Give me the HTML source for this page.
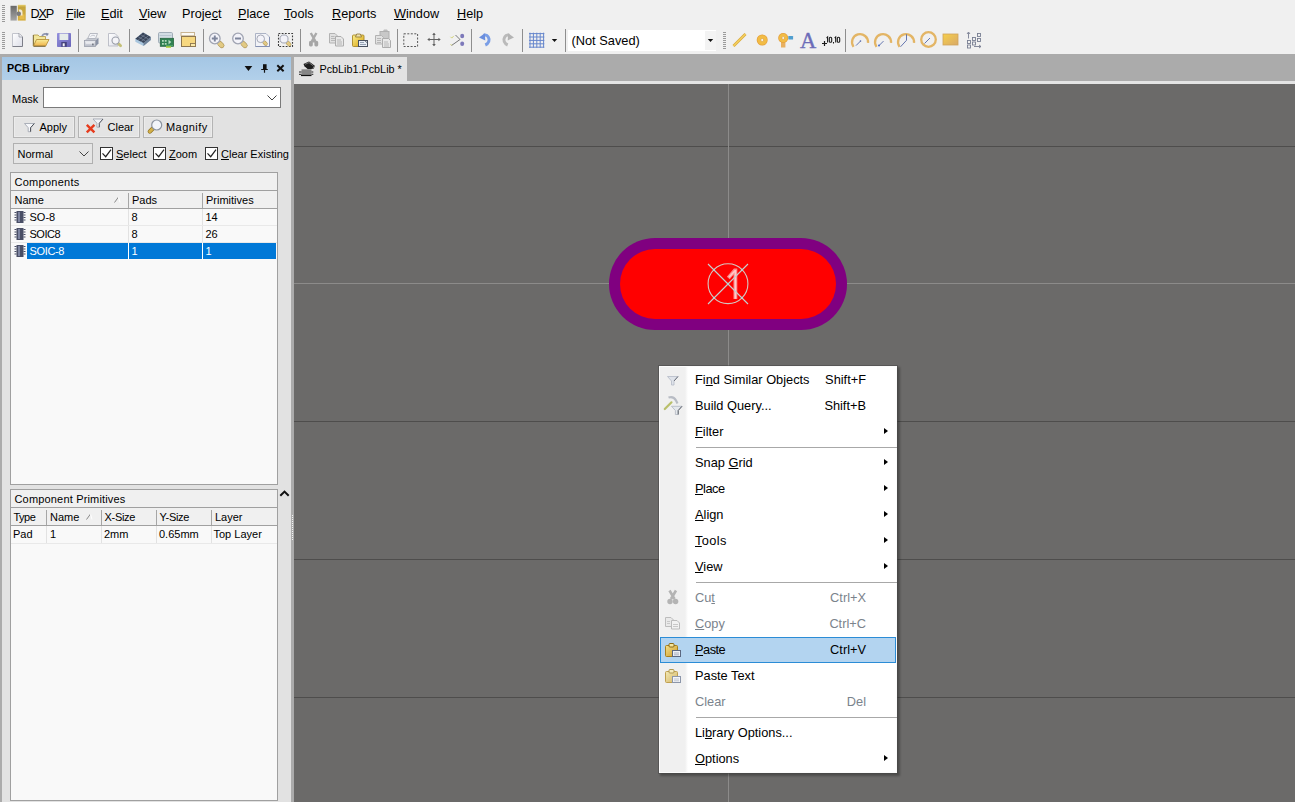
<!DOCTYPE html>
<html>
<head>
<meta charset="utf-8">
<title>PcbLib1.PcbLib</title>
<style>
html,body{margin:0;padding:0;}
body{width:1295px;height:802px;overflow:hidden;position:relative;background:#f0f0f0;font-family:"Liberation Sans",sans-serif;font-size:11px;color:#000;}
.abs{position:absolute;}
.t{position:absolute;white-space:nowrap;line-height:1;}
u{text-decoration:underline;text-underline-offset:1px;text-decoration-thickness:1px;}
/* top */
#topbar{left:0;top:0;width:1295px;height:54px;background:#f0f0f0;}
.mi{position:absolute;top:7px;font-size:12.7px;white-space:nowrap;line-height:14px;color:#000;}
.tsep{position:absolute;top:30px;width:1px;height:20px;background:#a0a0a0;}
.ico{position:absolute;top:32px;width:16px;height:16px;}
#band{left:0;top:54px;width:1295px;height:3px;background:#ababab;}
/* panel */
#panel{left:2px;top:57px;width:289px;height:745px;background:#e2e2e2;}
#leftstrip{left:0;top:57px;width:2px;height:745px;background:#ababab;}
#split{left:291px;top:57px;width:3px;height:745px;background:#ababab;}
#ptitle{left:2px;top:57px;width:289px;height:23px;background:linear-gradient(#a4c6e4,#b2d0ea);}
.pt{font-size:11px;}
.btn{position:absolute;height:20px;top:116px;border:1px solid #b4b4b4;background:#e4e4e4;box-sizing:content-box;box-shadow:inset 0 0 0 1px #ececec;}
.cb{position:absolute;top:147px;width:11px;height:11px;border:1px solid #333;background:#fff;}
.box{position:absolute;border:1px solid #a0a0a0;background:#f9f9f9;}
.hdr{position:absolute;left:0;right:0;background:#f0f0f0;border-bottom:1px solid #a0a0a0;}
.vd{position:absolute;width:1px;background:#e2e2e2;}
.vd.hd{background:#a6a6a6;}
/* doc area */
#tabstrip{left:294px;top:57px;width:1001px;height:24px;background:#ababab;}
#tabline{left:294px;top:81px;width:1001px;height:3px;background:#e4e4e4;}
#tab{left:294px;top:57px;width:113px;height:27px;background:#e3e3e3;}
#canvas{left:294px;top:84px;width:1001px;height:718px;background:#6b6a69;overflow:hidden;}
.hl{position:absolute;left:0;width:1001px;height:1px;background:#8c8b8a;}
.hl.dk{background:#4e4d4c;}
.vl{position:absolute;top:0;width:1px;height:718px;background:#8c8b8a;}
/* context menu */
#menu{left:659px;top:366px;width:236px;height:405px;background:#fff;border:1px solid #fbfbfb;box-shadow:0 0 0 1px rgba(70,70,70,0.5),2px 2px 2px 1px rgba(0,0,0,0.28);}
#gutter{left:0;top:0;width:28px;height:405px;background:linear-gradient(90deg,#f0f0f0 0,#f0f0f0 25px,#fff 28px);}
.m{position:absolute;left:35px;font-size:12.8px;white-space:nowrap;line-height:14px;color:#000;}
.k{position:absolute;right:30px;font-size:12.8px;white-space:nowrap;line-height:14px;color:#000;}
.dis{color:#7b838c;}
.msep{position:absolute;left:36px;right:-1px;height:1px;background:#a8a8a8;}
.arr{position:absolute;left:223.500px;width:0;height:0;border-left:4.500px solid #000;border-top:3.800px solid transparent;border-bottom:3.800px solid transparent;}
</style>
</head>
<body>
<!-- TOP BAR -->
<div id="topbar" class="abs">
  <div class="mi" style="left:30.5px;letter-spacing:-1.2px">D<u>X</u>P</div>
  <div class="mi" style="left:66px;letter-spacing:-0.35px"><u>F</u>ile</div>
  <div class="mi" style="left:101px"><u>E</u>dit</div>
  <div class="mi" style="left:139px"><u>V</u>iew</div>
  <div class="mi" style="left:182px">Proje<u>c</u>t</div>
  <div class="mi" style="left:238px"><u>P</u>lace</div>
  <div class="mi" style="left:284px"><u>T</u>ools</div>
  <div class="mi" style="left:332px"><u>R</u>eports</div>
  <div class="mi" style="left:394px"><u>W</u>indow</div>
  <div class="mi" style="left:457px"><u>H</u>elp</div>
</div>

<div class="abs" style="left:568px;top:30px;width:148px;height:21px;background:#fff;"></div>
<div class="abs" style="left:705px;top:31px;width:11px;height:19px;background:#f3f3f3;"></div>
<div class="t" style="left:571.5px;top:34px;font-size:12.8px;line-height:14px;">(Not Saved)</div>
<svg class="abs" style="left:0;top:0" width="1000" height="54" viewBox="0 0 1000 54">
<defs>
  <linearGradient id="gy" x1="0" y1="0" x2="0" y2="1"><stop offset="0" stop-color="#fbe9a0"/><stop offset="1" stop-color="#e9b94e"/></linearGradient>
  <linearGradient id="gor" x1="0" y1="0" x2="1" y2="1"><stop offset="0" stop-color="#f6cf4a"/><stop offset="1" stop-color="#d9a968"/></linearGradient>
  <g id="mag"><path d="M5 5l2 2" stroke="#a48c50" stroke-width="5.200" stroke-linecap="round"/><path d="M4.800 4.800l2.200 2.200" stroke="#e2ca84" stroke-width="4" stroke-linecap="round"/><circle cx="0" cy="0" r="5.300" fill="#f3f3f9" stroke="#a0a4b2" stroke-width="1.300"/></g>
  <g id="arc"><path d="M-6.500 5.500A8 8 0 1 1 8 1.500" fill="none" stroke="#e3b565" stroke-width="2.300"/></g>
</defs>
<!-- grips -->
<g stroke="#9a9a9a" stroke-width="1">
  <path d="M2 5.500h3M2 7.500h3M2 9.500h3M2 11.500h3M2 13.500h3M2 15.500h3M2 17.500h3M2 19.500h3M2 21.500h3"/>
  <path d="M2 32.500h3M2 34.500h3M2 36.500h3M2 38.500h3M2 40.500h3M2 42.500h3M2 44.500h3M2 46.500h3M2 48.500h3"/>
  <path d="M723 32.500h3M723 34.500h3M723 36.500h3M723 38.500h3M723 40.500h3M723 42.500h3M723 44.500h3M723 46.500h3M723 48.500h3"/>
</g>
<!-- separators -->
<g stroke="#8e8e8e" stroke-width="1">
  <path d="M78.500 29v23M129.500 29v23M203.500 29v23M300.500 29v23M397.500 29v23M471.500 29v23M522.500 29v23M565.500 29v23M845.500 29v23"/>
</g>
<!-- DXP logo -->
<g>
  <linearGradient id="glg" x1="0" y1="0" x2="0" y2="1"><stop offset="0" stop-color="#686868"/><stop offset="1" stop-color="#a6a6a6"/></linearGradient>
  <linearGradient id="glo" x1="0" y1="0" x2="0" y2="1"><stop offset="0" stop-color="#e8d070"/><stop offset="0.150" stop-color="#c4a43c"/><stop offset="1" stop-color="#d8b040"/></linearGradient>
  <rect x="10.500" y="5.800" width="6.300" height="14.800" fill="url(#glg)"/>
  <rect x="17.800" y="4.800" width="7.900" height="15.800" fill="url(#glo)"/>
  <rect x="19.500" y="14.500" width="5" height="4.500" fill="#e6bc4c"/>
  <path d="M18.500 9.500h2.500a3 3 0 0 1 1.500 3v3h-2z" fill="#f2ead8"/>
  <circle cx="18.700" cy="13.700" r="2.300" fill="#7c7c7c"/>
</g>
<!-- new -->
<linearGradient id="gpg" x1="0" y1="0" x2="1" y2="1"><stop offset="0" stop-color="#ffffff"/><stop offset="1" stop-color="#dcdee8"/></linearGradient>
<path d="M12.500 33.500h6.500l3.500 3.500v9.500h-10z" fill="url(#gpg)"/>
<path d="M12.500 46.500v-13h6.500" fill="none" stroke="#c2c4cc" stroke-width="1"/>
<path d="M19 33.500l3.500 3.500v9.500h-10" fill="none" stroke="#7c7e88" stroke-width="1"/>
<path d="M19 33.500v3.500h3.500" fill="#eef0f6" stroke="#9a9ca6" stroke-width="0.800"/>
<!-- open -->
<linearGradient id="gfo" x1="0" y1="0" x2="0" y2="1"><stop offset="0" stop-color="#f8ec98"/><stop offset="1" stop-color="#efb248"/></linearGradient>
<path d="M33.500 46v-11h4.500l1.500 1.500h6v3" fill="#f2e69a" stroke="#b8a050" stroke-width="0.900"/>
<path d="M33.300 46v-11" stroke="#7c6c3c" stroke-width="1"/>
<path d="M33.500 46l3-6.500h12.500l-3.300 6.500z" fill="url(#gfo)" stroke="#b89440" stroke-width="0.900"/>
<path d="M33.500 46.300h12" stroke="#6c5c34" stroke-width="0.900"/>
<path d="M42 36c1.500-2.500 4-2.800 5.500-1" fill="none" stroke="#8e96b0" stroke-width="1.600"/><path d="M46 32.800l3 1-2.200 2.500z" fill="#7e86a4"/>
<!-- save -->
<linearGradient id="gsv" x1="0" y1="0" x2="1" y2="1"><stop offset="0" stop-color="#9490de"/><stop offset="1" stop-color="#6864b8"/></linearGradient>
<rect x="57" y="33" width="14" height="14" rx="0.800" fill="url(#gsv)"/>
<rect x="59.500" y="33.600" width="8.800" height="6.400" fill="#e6ecea"/>
<rect x="61.300" y="42" width="5.500" height="4.800" fill="#45427c"/><rect x="62.700" y="43.300" width="2" height="3" fill="#f0f0f8"/>
<!-- print -->
<linearGradient id="gpr" x1="0" y1="0" x2="0" y2="1"><stop offset="0" stop-color="#eceef2"/><stop offset="1" stop-color="#b4b8c4"/></linearGradient>
<path d="M84.500 40.500l3-2.800h11l-3 2.800z" fill="#c4c8d0"/>
<path d="M95.500 40.500l3-2.800v5.800l-3 3z" fill="#8a92a4"/>
<path d="M87.800 38.500l2.200-5h7.500l-2 5z" fill="#f4f5f8" stroke="#a8acb6" stroke-width="0.800"/>
<path d="M90.500 36.500c1.500-1.500 3-1.500 4.500-0.500" fill="none" stroke="#b4b8c0" stroke-width="0.800"/>
<rect x="84.500" y="40.500" width="11" height="6" fill="url(#gpr)" stroke="#9ca0ac" stroke-width="0.800"/>
<path d="M86 43h8" stroke="#f8f8fa" stroke-width="1"/>
<rect x="92.300" y="43.500" width="1.200" height="1.800" fill="#555a66"/>
<!-- preview -->
<path d="M108.500 33.500h6.500l3 3v9.500h-9.500z" fill="url(#gpg)" stroke="#b8bac4" stroke-width="0.900"/>
<path d="M118.600 43.800l2 2" stroke="#c4c078" stroke-width="2.800" stroke-linecap="round"/>
<circle cx="115.600" cy="40.600" r="3.600" fill="#f4f4f8" stroke="#9a9ea8" stroke-width="1.100"/>
<!-- 3d chip -->
<path d="M135.300 38.700l7.700-6.200 7.800 4.500v3l-7.300 6-8.200-4.300z" fill="#a9c6de"/>
<path d="M143.500 43l7.300-6v3l-7.300 6z" fill="#6f8198"/>
<path d="M135.300 38.700l7.700-6.200 7.800 4.500-7.300 6z" fill="#384458"/>
<g stroke="#8c9ab0" stroke-width="0.500"><path d="M138 36.600l7.500 4.500M140.500 34.600l7.700 4.400M138 40.200l7.700-6.200M141 41.700l7.600-6.100"/></g>
<!-- pcb green -->
<rect x="158.500" y="32.500" width="14" height="10.500" rx="1.200" fill="#d3dde4" stroke="#9aa6b2" stroke-width="0.900"/>
<path d="M159.500 35.500h12" stroke="#b8c6d0" stroke-width="1"/>
<rect x="160.300" y="38.300" width="13.200" height="8" fill="#2f8052" stroke="#27663f" stroke-width="0.800"/>
<path d="M162 40h1.800v1.800h-1.800zM164.800 40h1.800v1.800h-1.800zM162 43h1.800v1.800h-1.800zM164.800 43h1.800v1.800h-1.800z" fill="#b4d8bc"/><path d="M168.500 39.800l2.800 2.300-2.800 2.300z" fill="#b8dcc4"/>
<path d="M166 45.500h7" stroke="#4ca468" stroke-width="1.200"/>
<rect x="166" y="46.300" width="5" height="1.500" fill="#b4d43a"/>
<!-- yellow window -->
<rect x="181" y="32.500" width="13.500" height="3.300" fill="#fbfaf6" stroke="#c4ae88" stroke-width="0.900"/>
<rect x="181.500" y="36.500" width="14" height="10" fill="#f7d880" stroke="#8c7650" stroke-width="1"/>
<rect x="190.500" y="43.500" width="5" height="3" fill="#fbe9a8" stroke="#8c7650" stroke-width="0.900"/>
<!-- zoom in / out / page / sel -->
<g transform="translate(214.800,38.500)"><use href="#mag"/><path d="M-3 0h6M0 -3v6" stroke="#7e869c" stroke-width="1.900"/></g>
<g transform="translate(238,38.500)"><use href="#mag"/><path d="M-3 0h6" stroke="#7e869c" stroke-width="2"/></g>
<path d="M255.500 33.500h10.500l3.500 3.500v9.500h-14z" fill="#f2f3f7" stroke="#a4acc0" stroke-width="0.900"/><path d="M269.500 37v9.500h-14" fill="none" stroke="#7f8cb0" stroke-width="0.900"/>
<g transform="translate(260.700,38.800) scale(0.720)"><use href="#mag"/></g>
<rect x="278.500" y="33.500" width="14" height="13" fill="none" stroke="#3a3a3a" stroke-width="1.100" stroke-dasharray="1.800 1.400"/>
<g transform="translate(284,39) scale(0.760)"><use href="#mag"/></g>
<!-- cut grey -->
<path d="M310.800 33l4.700 8.500M316.400 33l-4.700 8.500" stroke="#aaaaaa" stroke-width="2.400"/>
<rect x="309" y="41" width="3.800" height="5.500" rx="1.400" fill="#a6a6a6"/><rect x="314.400" y="41" width="3.800" height="5.500" rx="1.400" fill="#a6a6a6"/>
<rect x="312" y="40" width="3.200" height="2.500" fill="#a8a8a8"/>
<!-- copy grey -->
<path d="M329.500 33.500h5.500l2.500 2.500v7h-8z" fill="#e0e0e0" stroke="#b2b2b2" stroke-width="1"/>
<path d="M331 36.500h3.500M331 38.500h4M331 40.500h4" stroke="#b8b8b8" stroke-width="1"/>
<path d="M335.500 36.500h5.500l2.500 2.500v7h-8z" fill="#e8e8e8" stroke="#acacac" stroke-width="1"/>
<path d="M337 40h4M337 42h5M337 44h5" stroke="#b4b4b4" stroke-width="1"/>
<!-- paste -->
<linearGradient id="gpa" x1="0" y1="0" x2="1" y2="1"><stop offset="0" stop-color="#fbf090"/><stop offset="0.600" stop-color="#e6c040"/><stop offset="1" stop-color="#c89820"/></linearGradient>
<rect x="352.500" y="35" width="11.500" height="11.500" rx="1" fill="url(#gpa)" stroke="#a88828" stroke-width="0.900"/>
<path d="M355.500 37l1.200-3h3.600l1.200 3z" fill="#efe2b0" stroke="#8c7430" stroke-width="0.800"/>
<rect x="358.500" y="40.500" width="9" height="6" fill="#e8eef6" stroke="#48505e" stroke-width="1"/>
<path d="M364.500 40.500l3 2.500" stroke="#48505e" stroke-width="0.800"/>
<path d="M360 42.500h4M360 44.500h6" stroke="#8c98ac" stroke-width="0.900"/>
<!-- paste special grey -->
<rect x="380" y="31.500" width="9" height="10" fill="#c8c8c8" stroke="#b0b0b0" stroke-width="1"/>
<path d="M383 31l1-1.500h3l1 1.500z" fill="#bcbcbc"/>
<path d="M375.500 35.500h6l2 2v6.500h-8z" fill="#e2e2e2" stroke="#b2b2b2" stroke-width="1"/>
<path d="M382.500 38.500h6l2 2v7h-8z" fill="#e8e8e8" stroke="#acacac" stroke-width="1"/>
<path d="M384 42h4M384 44h5M384 46h5M377 38.500h4M377 40.500h4M377 42.500h4" stroke="#b8b8b8" stroke-width="1"/>
<!-- select rect -->
<rect x="403.800" y="33.800" width="13.800" height="12.700" fill="none" stroke="#585858" stroke-width="1" stroke-dasharray="2 1.500"/>
<!-- move -->
<path d="M428 39.500h12M434 33.500v12" stroke="#606060" stroke-width="1"/>
<path d="M427.300 39.500l2.300-1.800v3.600zM440.700 39.500l-2.300-1.800v3.600zM434 32.800l-1.800 2.300h3.600zM434 46.200l-1.800-2.300h3.600z" fill="#606060"/>
<!-- deselect -->
<path d="M455.500 35l4.500 4.500-8.500 6" fill="none" stroke="#6a6a6a" stroke-width="0.900"/>
<path d="M450.500 36.800l1.300 1.300 2-2.200M450.500 44l1.300 1.500" fill="none" stroke="#d0d070" stroke-width="0.900"/>
<ellipse cx="462.200" cy="36" rx="2" ry="2.300" fill="#7d79ba"/><ellipse cx="462.200" cy="43.800" rx="2" ry="2.300" fill="#7d79ba"/>
<!-- undo -->
<path d="M485.300 45c3.500-1.500 4.800-5 3-8-1-1.800-2.800-2.300-4.500-1.800" fill="none" stroke="#7a9ee6" stroke-width="3"/>
<path d="M479 37.500l5.800-4.300 0.500 7.300z" fill="#6a8ede"/>
<!-- redo -->
<path d="M507.700 45c-3.500-1.500-4.800-5-3-8 1-1.800 2.800-2.300 4.500-1.800" fill="none" stroke="#bababa" stroke-width="3"/>
<path d="M514 37.500l-5.800-4.300-0.500 7.300z" fill="#b4b4b4"/>
<!-- grid -->
<g stroke="#6686cc" stroke-width="1"><path d="M530 32.700v15M533.400 32.700v15M536.800 32.700v15M540.200 32.700v15M543.600 32.700v15M529 33.600h15.300M529 37h15.300M529 40.400h15.300M529 43.800h15.300M529 47.200h15.300"/></g>
<path d="M551.800 39h5.400l-2.700 3z" fill="#111"/>
<path d="M707.800 39h5.400l-2.700 3z" fill="#111"/>
<!-- line -->
<path d="M733.500 46l12-12" stroke="#d8a838" stroke-width="2.800"/>
<path d="M733.500 46l12-12" stroke="#f4d060" stroke-width="1.400"/>
<!-- pad -->
<circle cx="762.200" cy="40" r="5.500" fill="#e4a03c"/>
<circle cx="762.200" cy="40" r="4.800" fill="#f2bc44"/>
<circle cx="762.200" cy="40" r="1.500" fill="#fbf6ea" stroke="#d89a3a" stroke-width="0.600"/>
<!-- via -->
<rect x="788.300" y="36" width="4.800" height="3.600" rx="0.600" fill="#4f9ecf"/>
<rect x="781" y="41" width="4.400" height="6.500" fill="#e8b060"/>
<circle cx="783.200" cy="38" r="5" fill="#e4a03c"/>
<circle cx="783.200" cy="38" r="4.300" fill="#f2bc44"/>
<circle cx="783.200" cy="38" r="1.400" fill="#fbf6ea" stroke="#d89a3a" stroke-width="0.600"/>
<!-- A -->
<text x="808" y="47.500" style="font-family:'Liberation Serif',serif" font-size="22.500" text-anchor="middle" fill="#6c6cb8" stroke="#6c6cb8" stroke-width="0.400">A</text>
<!-- +10,10 -->
<path d="M822 43.500h5M824.500 41v5" stroke="#1a1a1a" stroke-width="1.200"/>
<g fill="none" stroke="#1a1a1a" stroke-width="1.100">
  <path d="M826.600 38l1-1v5.600"/><rect x="829.300" y="37.300" width="2.400" height="5" rx="1.100"/>
  <path d="M833.500 42v1.500"/>
  <path d="M834.700 38l1-1v5.600"/><rect x="837.300" y="37.300" width="2.400" height="5" rx="1.100"/>
</g>
<!-- arcs -->
<g transform="translate(860,41.300)"><use href="#arc"/><path d="M-4 4.300l4.500-4.500" stroke="#5468a8" stroke-width="0.900"/><circle cx="0.500" cy="-0.300" r="0.800" fill="#5468a8"/></g>
<g transform="translate(883,41.300)"><use href="#arc"/><path d="M-4 4.300l4.500-4.500" stroke="#5468a8" stroke-width="0.900"/><circle cx="-4" cy="4.300" r="1" fill="#4a70d0"/></g>
<g transform="translate(906,41.300)"><use href="#arc"/><path d="M-5.500 5.500l6-6.500v-6" fill="none" stroke="#5468a8" stroke-width="0.900"/></g>
<circle cx="928.500" cy="39.500" r="7.300" fill="none" stroke="#e3b565" stroke-width="2.300"/><path d="M924.500 43.500l5.500-5.500" stroke="#5468a8" stroke-width="0.900"/>
<!-- fill -->
<rect x="943" y="34" width="15" height="11" fill="url(#gor)" stroke="#d0a45a" stroke-width="0.800"/>
<!-- array -->
<g fill="none" stroke="#787e92" stroke-width="0.900"><rect x="967.500" y="40.500" width="3" height="3"/><rect x="967.500" y="45" width="3" height="3"/><rect x="972.500" y="37.500" width="3" height="3"/><rect x="972.500" y="42" width="3" height="3"/><rect x="977.500" y="33.500" width="3" height="3"/><rect x="977.500" y="38.500" width="3" height="3"/>
<path d="M968.500 38.500v-6M967 34l1.500-2 1.500 2M974 46.500h7M979 45l2 1.500-2 1.500"/></g>
</svg>
<div id="band" class="abs"></div>

<!-- LEFT PANEL -->
<div id="leftstrip" class="abs"></div>
<div id="panel" class="abs"></div>
<div id="ptitle" class="abs"></div>
<div id="split" class="abs"></div>

<!-- panel title -->
<div class="t" style="left:7px;top:62px;font-size:10.8px;font-weight:bold;line-height:13px;">PCB Library</div>
<svg class="abs" style="left:243px;top:62px" width="44" height="14" viewBox="243 62 44 14">
  <path d="M244.600 66h7.700l-3.850 5z" fill="#111"/>
  <path d="M263 64.200h3.600v4.800h-3.600z" fill="#111"/><path d="M261.200 69.500h6.600M264.500 70v2.800" stroke="#111" stroke-width="1.200" fill="none"/>
  <path d="M277.300 65.300l6.300 6M283.600 65.300l-6.300 6" stroke="#111" stroke-width="2" fill="none"/>
</svg>
<!-- mask -->
<div class="t pt" style="left:12px;top:93px;line-height:13px;">Mask</div>
<div class="abs" style="left:43px;top:87px;width:236px;height:19px;background:#fff;border:1px solid #7a7a7a;"></div>
<svg class="abs" style="left:266px;top:94px" width="12" height="8" viewBox="0 0 12 8"><path d="M1.500 1.500l4.500 4.500 4.500-4.500" stroke="#444" stroke-width="1" fill="none"/></svg>
<!-- buttons -->
<div class="btn" style="left:13px;width:60px;"></div>
<div class="btn" style="left:78px;width:60px;"></div>
<div class="btn" style="left:143px;width:68px;"></div>
<svg class="abs" style="left:22px;top:121px" width="14" height="12" viewBox="22 121 14 12"><path d="M24.500 123.500h9.800l-3.700 4.200v4h-2.400v-4z" fill="#f6f7fa" stroke="#a4a8b2" stroke-width="0.900"/><path d="M34.300 123.500l-3.700 4.200v4" fill="none" stroke="#4c5058" stroke-width="1"/></svg>
<div class="t pt" style="left:39.5px;top:121px;line-height:13px;">Apply</div>
<svg class="abs" style="left:85px;top:117px" width="20" height="17" viewBox="85 117 20 17"><path d="M93 119h10l-3.700 4.200v4h-2.400v-4z" fill="#f2f4f8" stroke="#a4a8b2" stroke-width="0.900"/><path d="M103 119l-3.700 4.200v4" fill="none" stroke="#5c6068" stroke-width="1"/><path d="M86.800 124.800l7.600 7.600M94.400 124.800l-7.600 7.600" stroke="#e63c1e" stroke-width="2.400"/></svg>
<div class="t pt" style="left:107.5px;top:121px;line-height:13px;">Clear</div>
<svg class="abs" style="left:146px;top:117px" width="18" height="18" viewBox="146 117 18 18"><path d="M149.800 131.500l3-3" stroke="#8c7020" stroke-width="4.200" stroke-linecap="round"/><path d="M149.800 131.500l3-3" stroke="#d4b048" stroke-width="3" stroke-linecap="round"/><circle cx="156.700" cy="125" r="5" fill="#f2f5fa" stroke="#8c94a0" stroke-width="1.200"/></svg>
<div class="t pt" style="left:166px;top:121px;line-height:13px;;letter-spacing:0.45px">Magnify</div>
<!-- normal dropdown -->
<div class="abs" style="left:13px;top:143px;width:78px;height:19px;background:#e5e5e5;border:1px solid #b0b0b0;"></div>
<div class="t pt" style="left:17.5px;top:148px;line-height:13px;">Normal</div>
<svg class="abs" style="left:78px;top:150px" width="12" height="8" viewBox="0 0 12 8"><path d="M1.500 1.500l4.500 4.500 4.500-4.500" stroke="#444" stroke-width="1" fill="none"/></svg>
<!-- checkboxes -->
<div class="cb" style="left:100px;"></div><div class="cb" style="left:153px;"></div><div class="cb" style="left:205px;"></div>
<svg class="abs" style="left:100px;top:147px" width="120" height="13" viewBox="0 0 120 13"><g stroke="#222" stroke-width="1.200" fill="none"><path d="M2.500 6.300l3.200 3.400 5.300-7"/><path d="M55.500 6.300l3.200 3.400 5.300-7"/><path d="M107.500 6.300l3.200 3.400 5.300-7"/></g></svg>
<div class="t pt" style="left:116px;top:148px;line-height:13px;"><u>S</u>elect</div>
<div class="t pt" style="left:169px;top:148px;line-height:13px;"><u>Z</u>oom</div>
<div class="t pt" style="left:221px;top:148px;line-height:13px;"><u>C</u>lear Existing</div>
<!-- components box -->
<div class="box" style="left:10px;top:172px;width:266px;height:311px;">
  <div class="hdr" style="top:0;height:17px;"></div>
  <div class="hdr" style="top:18px;height:17px;"></div>
  <div class="vd hd" style="left:117px;top:20px;height:15px;"></div>
  <div class="vd hd" style="left:191px;top:20px;height:15px;"></div>
  <div class="vd" style="left:117px;top:36px;height:34px;"></div>
  <div class="vd" style="left:191px;top:36px;height:34px;"></div>
  <div class="abs" style="left:0;top:52px;width:266px;height:1px;background:#e9e9e9"></div>
  <div class="abs" style="left:0;top:69px;width:266px;height:1px;background:#e9e9e9"></div>
  <div class="abs" style="left:16px;top:70px;width:249px;height:16px;background:#0078d7;"></div>
  <div class="abs" style="left:117px;top:70px;width:1px;height:16px;background:#fff;"></div>
  <div class="abs" style="left:191px;top:70px;width:1px;height:16px;background:#fff;"></div>
</div>
<div class="t pt" style="left:14.5px;top:176px;line-height:13px;;letter-spacing:0.27px">Components</div>
<div class="t pt" style="left:14.5px;top:194px;line-height:13px;">Name</div>
<div class="t pt" style="left:132px;top:194px;line-height:13px;">Pads</div>
<div class="t pt" style="left:206px;top:194px;line-height:13px;">Primitives</div>
<svg class="abs" style="left:113px;top:196px" width="9" height="8" viewBox="0 0 9 8"><path d="M1.5 6.5l4-5.5" stroke="#888" stroke-width="1"/><path d="M5.5 1l1.5 5.5" stroke="#fff" stroke-width="1"/></svg>
<div class="t pt" style="left:29.5px;top:211px;line-height:13px;">SO-8</div>
<div class="t pt" style="left:131.5px;top:211px;line-height:13px;">8</div>
<div class="t pt" style="left:205.5px;top:211px;line-height:13px;">14</div>
<div class="t pt" style="left:29.5px;top:228px;line-height:13px;;letter-spacing:-0.5px">SOIC8</div>
<div class="t pt" style="left:131.5px;top:228px;line-height:13px;">8</div>
<div class="t pt" style="left:205.5px;top:228px;line-height:13px;">26</div>
<div class="t pt" style="left:29.5px;top:245px;line-height:13px;color:#fff;;letter-spacing:-0.35px">SOIC-8</div>
<div class="t pt" style="left:131.5px;top:245px;line-height:13px;color:#fff;">1</div>
<div class="t pt" style="left:205.5px;top:245px;line-height:13px;color:#fff;">1</div>
<svg class="abs" style="left:14px;top:210px" width="12" height="48" viewBox="0 0 12 48">
  <g id="chip"><rect x="2.5" y="1" width="7" height="12" fill="#4a4f66"/><path d="M0.5 2.5h2M0.5 5h2M0.5 7.5h2M0.5 10h2M9.5 2.5h2M9.5 5h2M9.5 7.5h2M9.5 10h2" stroke="#4a4f66" stroke-width="1.2"/><rect x="4" y="2" width="2" height="10" fill="#7d84a0"/></g>
  <use href="#chip" y="17"/><use href="#chip" y="34"/>
</svg>
<!-- primitives box -->
<div class="box" style="left:10px;top:489px;width:266px;height:310px;">
  <div class="hdr" style="top:0;height:17px;"></div>
  <div class="hdr" style="top:18px;height:17px;"></div>
  <div class="vd hd" style="left:35px;top:20px;height:15px;"></div>
  <div class="vd" style="left:35px;top:36px;height:17px;"></div>
  <div class="vd hd" style="left:90px;top:20px;height:15px;"></div>
  <div class="vd" style="left:90px;top:36px;height:17px;"></div>
  <div class="vd hd" style="left:145px;top:20px;height:15px;"></div>
  <div class="vd" style="left:145px;top:36px;height:17px;"></div>
  <div class="vd hd" style="left:200px;top:20px;height:15px;"></div>
  <div class="vd" style="left:200px;top:36px;height:17px;"></div>
  <div class="abs" style="left:0;top:53px;width:266px;height:1px;background:#e9e9e9"></div>
</div>
<div class="t pt" style="left:14.5px;top:493px;line-height:13px;;letter-spacing:0.17px">Component Primitives</div>
<div class="t pt" style="left:13px;top:511px;line-height:13px;;letter-spacing:-0.5px;left:13.5px">Type</div>
<div class="t pt" style="left:50px;top:511px;line-height:13px;">Name</div>
<div class="t pt" style="left:104.5px;top:511px;line-height:13px;;letter-spacing:-0.3px">X-Size</div>
<div class="t pt" style="left:159.5px;top:511px;line-height:13px;;letter-spacing:-0.3px">Y-Size</div>
<div class="t pt" style="left:215px;top:511px;line-height:13px;">Layer</div>
<svg class="abs" style="left:85px;top:513px" width="9" height="8" viewBox="0 0 9 8"><path d="M1.5 6.5l4-5.5" stroke="#888" stroke-width="1"/><path d="M5.5 1l1.5 5.5" stroke="#fff" stroke-width="1"/></svg>
<div class="t pt" style="left:13px;top:528px;line-height:13px;">Pad</div>
<div class="t pt" style="left:50px;top:528px;line-height:13px;">1</div>
<div class="t pt" style="left:104px;top:528px;line-height:13px;">2mm</div>
<div class="t pt" style="left:159px;top:528px;line-height:13px;">0.65mm</div>
<div class="t pt" style="left:213.5px;top:528px;line-height:13px;">Top Layer</div>
<svg class="abs" style="left:279px;top:489px" width="11" height="9" viewBox="0 0 11 9"><path d="M1.300 6.800l4.200-4.200 4.200 4.200" stroke="#111" stroke-width="2" fill="none"/></svg>
<div class="abs" style="left:292px;top:515px;width:1px;height:26px;background:repeating-linear-gradient(#f4f4f4 0,#f4f4f4 1px,transparent 1px,transparent 2px);"></div>

<!-- DOC AREA -->
<div id="tabstrip" class="abs"></div>
<div id="tabline" class="abs"></div>
<div id="tab" class="abs"></div>
<svg class="abs" style="left:298px;top:60px" width="18" height="18" viewBox="298 60 18 18">
  <path d="M303.500 64l5.500-2.500 5.800 4.300-1 3-6 0.500-3.300-3z" fill="#1c1c1c"/>
  <path d="M305 64.300l4-1.700 4.300 3.300" fill="none" stroke="#8a8a8a" stroke-width="0.800"/>
  <path d="M313.800 66.500l-0.800 2.300" stroke="#9a9a9a" stroke-width="0.800"/>
  <rect x="301.500" y="69.300" width="10" height="5.700" fill="#858585"/>
  <path d="M301 75.500h10.500" stroke="#111" stroke-width="1.200"/>
  <path d="M299 72h2.500M299 74.300h2.500M311.500 72h1.800M311.500 74.300h1.800" stroke="#222" stroke-width="1"/>
</svg>
<div class="t" style="left:319.5px;top:63px;font-size:10.8px;line-height:13px;">PcbLib1.PcbLib *</div>
<div id="canvas" class="abs">
  <div class="hl dk" style="top:62px"></div>
  <div class="hl" style="top:199px"></div>
  <div class="hl dk" style="top:337px"></div>
  <div class="hl dk" style="top:475px"></div>
  <div class="hl dk" style="top:613px"></div>
  <div class="vl" style="left:434px"></div>
</div>

<div class="abs" style="left:609px;top:238px;width:238px;height:92px;border-radius:46px;background:#800080;"></div>
<div class="abs" style="left:620px;top:249px;width:216px;height:70px;border-radius:35px;background:#ff0000;"></div>
<svg class="abs" style="left:700px;top:256px" width="56" height="56" viewBox="700 256 56 56">
  <path d="M728.300 278l6.500-7.500h0.600v28.500" fill="none" stroke="#ff8a8a" stroke-width="3.800" stroke-linejoin="miter"/>
  <path d="M729 277.300l6-6.500h0.400v28" fill="none" stroke="#ffcaca" stroke-width="1.600"/>
  <circle cx="728" cy="283.700" r="19.900" fill="none" stroke="#d6c6c0" stroke-width="1.100"/>
  <path d="M708 264l40 40M748 264l-40 40" stroke="#c4d0d0" stroke-width="1.100"/>
  <g fill="#a8dcdc"><circle cx="728" cy="283.800" r="1.100"/><circle cx="714" cy="269.800" r="1"/><circle cx="742" cy="269.800" r="1"/><circle cx="714" cy="297.800" r="1"/><circle cx="742" cy="297.800" r="1"/></g>
</svg>

<!-- CONTEXT MENU -->
<div id="menu" class="abs">
  <div id="gutter" class="abs"></div>
  <div class="abs" style="left:0px;top:270px;width:234px;height:24px;background:#b3d4f0;border:1px solid #2b8cd6;"></div>
  <div class="m" style="top:6px">Fi<u>n</u>d Similar Objects</div>
  <div class="k" style="top:6px">Shift+F</div>
  <div class="m" style="top:32px">Build Query...</div>
  <div class="k" style="top:32px">Shift+B</div>
  <div class="m" style="top:58px"><u>F</u>ilter</div>
  <div class="arr" style="top:61px"></div>
  <div class="m" style="top:89px">Snap <u>G</u>rid</div>
  <div class="arr" style="top:92px"></div>
  <div class="m" style="top:115px;letter-spacing:-0.5px"><u>P</u>lace</div>
  <div class="arr" style="top:118px"></div>
  <div class="m" style="top:141px"><u>A</u>lign</div>
  <div class="arr" style="top:144px"></div>
  <div class="m" style="top:167px;letter-spacing:0.35px"><u>T</u>ools</div>
  <div class="arr" style="top:170px"></div>
  <div class="m" style="top:193px"><u>V</u>iew</div>
  <div class="arr" style="top:196px"></div>
  <div class="m dis" style="top:224px">Cu<u>t</u></div>
  <div class="k dis" style="top:224px">Ctrl+X</div>
  <div class="m dis" style="top:250px"><u>C</u>opy</div>
  <div class="k dis" style="top:250px">Ctrl+C</div>
  <div class="m" style="top:276px;letter-spacing:-0.5px"><u>P</u>aste</div>
  <div class="k" style="top:276px">Ctrl+V</div>
  <div class="m" style="top:302px">Paste Text</div>
  <div class="m dis" style="top:328px">Clear</div>
  <div class="k dis" style="top:328px">Del</div>
  <div class="m" style="top:359px">Li<u>b</u>rary Options...</div>
  <div class="m" style="top:385px"><u>O</u>ptions</div>
  <div class="arr" style="top:388px"></div>
  <svg class="abs" style="left:0;top:0" width="30" height="405" viewBox="660 367 30 405">
    <defs><linearGradient id="gy2" x1="0" y1="0" x2="1" y2="1"><stop offset="0" stop-color="#f6e08a"/><stop offset="1" stop-color="#c99a28"/></linearGradient>
    <linearGradient id="gy3" x1="0" y1="0" x2="1" y2="1"><stop offset="0" stop-color="#f3e9b4"/><stop offset="1" stop-color="#d4b668"/></linearGradient></defs>
    <!-- funnel -->
    <path d="M667.500 376.500h10.500l-4 4.500v4h-2.500v-4z" fill="#dfe3ea" stroke="#b4bac6" stroke-width="0.800"/>
    <path d="M678 376.500l-4 4.500" stroke="#6a6e78" stroke-width="1"/>
    <!-- build query -->
    <path d="M664.800 409l6.700-6.700" stroke="#b9bf6a" stroke-width="2.200" stroke-linecap="round"/>
    <path d="M668.500 397.500c3-1 6 0 7.500 3l1.500 3" fill="none" stroke="#b8bcc4" stroke-width="2.200"/>
    <path d="M671.500 406.300h10.500l-3.800 4.200v4h-2.800v-4z" fill="#e4e7ec" stroke="#b0b6c0" stroke-width="0.800"/>
    <path d="M682 406.300l-3.800 4.200v4" stroke="#5c6068" stroke-width="1" fill="none"/>
    <!-- cut -->
    <path d="M669.500 590.500l5 8.500M676 590.500l-5 8.500" stroke="#b4b4b4" stroke-width="2.600"/>
    <circle cx="670" cy="601.500" r="2.700" fill="#b4b4b4"/><circle cx="675.600" cy="601.500" r="2.700" fill="#b4b4b4"/>
    <!-- copy -->
    <path d="M665.500 617.500h5.500l2.500 2.500v6.500h-8z" fill="#e9e9e9" stroke="#bcbcbc" stroke-width="1"/>
    <path d="M671.500 620.500h5.500l2.500 2.500v6h-8z" fill="#f2f2f2" stroke="#bcbcbc" stroke-width="1"/>
    <path d="M673 624.500h5M673 626.500h5M667 621.500h3M667 623.500h3" stroke="#c8c8c8" stroke-width="1"/>
    <!-- paste -->
    <rect x="665.500" y="645.500" width="12" height="11" rx="1" fill="url(#gy2)" stroke="#a8801c" stroke-width="1"/>
    <rect x="669" y="643.500" width="5" height="3.500" rx="1" fill="#f4e6a0" stroke="#8a6a18" stroke-width="1"/>
    <rect x="672.500" y="650.500" width="8" height="6" fill="#eef1f6" stroke="#5c6880" stroke-width="1"/>
    <path d="M674 653h5M674 654.800h5" stroke="#9aa2b4" stroke-width="0.800"/>
    <!-- paste text -->
    <rect x="665.500" y="671.500" width="12" height="11" rx="1" fill="url(#gy3)" stroke="#c0a050" stroke-width="1"/>
    <rect x="669" y="669.500" width="5" height="3.500" rx="1" fill="#f4ecc0" stroke="#b09850" stroke-width="1"/>
    <rect x="672.500" y="676.500" width="8" height="6" fill="#f2f4f8" stroke="#8c96aa" stroke-width="1"/>
    <path d="M674 679h5M674 680.800h5" stroke="#b4bac8" stroke-width="0.800"/>
  </svg>
  <div class="msep" style="top:80px"></div>
  <div class="msep" style="top:215px"></div>
  <div class="msep" style="top:350px"></div>
</div>
</body>
</html>
